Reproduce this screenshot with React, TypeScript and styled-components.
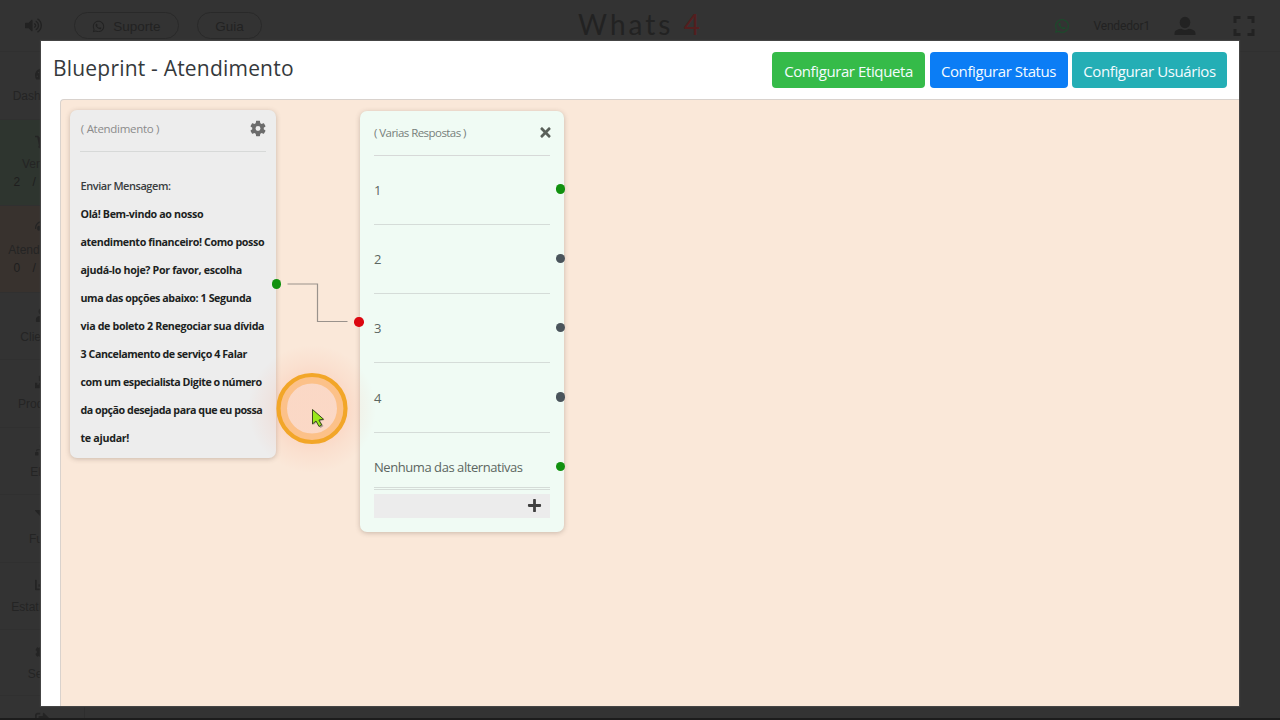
import React from "react";
import styled, { createGlobalStyle } from "styled-components";
import {
  FaVolumeUp, FaWhatsapp, FaTachometerAlt, FaShoppingCart, FaHeadset,
  FaUser, FaBoxes, FaSitemap, FaFilter, FaChartBar, FaCog, FaSignOutAlt, FaTimes, FaPlus,
} from "react-icons/fa";
import type { IconType } from "react-icons";

const Global = createGlobalStyle`
  * { box-sizing: border-box; }
  body { margin: 0; background: #333; overflow: hidden; font-family: "Open Sans", "Noto Sans", sans-serif; }
`;

const Screen = styled.div`
  position: relative;
  width: 1280px;
  height: 720px;
  overflow: hidden;
  background: #333;
`;

const TopBar = styled.header`
  display: flex;
  align-items: center;
  height: 52px;
  padding: 0 25px;
  border-bottom: 1px solid #303030;
  color: #222;
  font-family: "Liberation Sans", Arial, sans-serif;
  font-size: 13.5px;
`;
const BarGroup = styled.div<{ $end?: boolean }>`
  flex: 1;
  display: flex;
  align-items: center;
  justify-content: ${(p) => (p.$end ? "flex-end" : "flex-start")};
`;
const Pill = styled.div<{ $w: number; $ml: number }>`
  display: flex;
  align-items: center;
  justify-content: center;
  gap: 8px;
  width: ${(p) => p.$w}px;
  height: 27px;
  margin-left: ${(p) => p.$ml}px;
  padding-top: 1px;
  border: 1px solid #292929;
  border-radius: 14px;
`;
const Brand = styled.div`
  padding-left: 1px;
  font: 28px Lato, sans-serif;
  letter-spacing: 3px;
  line-height: 48px;
  align-self: flex-start;
  span { color: #541e1e; }
`;
const Seller = styled.span`
  margin: 0 24px 0 23px;
  padding-top: 1px;
  font: 12px Roboto, sans-serif;
  letter-spacing: -0.15px;
`;
const FullScreenIcon = styled.svg`
  margin-left: 37px;
`;

const Side = styled.nav`
  display: flex;
  flex-direction: column;
  width: 85px;
  border-right: 1px solid #2e2e2e;
`;
const SideItem = styled.div<{ $h: number; $bg?: string }>`
  flex: none;
  display: flex;
  flex-direction: column;
  align-items: center;
  height: ${(p) => p.$h}px;
  padding-top: 15px;
  border-bottom: 1px solid #303030;
  background: ${(p) => p.$bg ?? "transparent"};
  color: #242424;
  font: 12px/18px "Liberation Sans", Arial, sans-serif;
  svg { margin-bottom: 6px; flex: none; }
`;
const Count = styled.div`
  letter-spacing: 4.5px;
  line-height: 18px;
  color: #1e1e1e;
  white-space: pre;
`;

const BottomEdge = styled.div`
  position: absolute;
  left: 0;
  right: 0;
  bottom: 0;
  height: 2px;
  background: #1c1c1c;
`;

const Modal = styled.section`
  position: absolute;
  left: 41px;
  top: 41px;
  width: 1198px;
  height: 665px;
  display: flex;
  flex-direction: column;
  background: #fff;
  box-shadow: 0 0 1px 1px #444;
`;
const ModalHead = styled.div`
  flex: none;
  display: flex;
  justify-content: space-between;
  height: 58px;
  padding: 11px 12px 0 12px;
`;
const Title = styled.h1`
  margin: 0;
  font-size: 21px;
  font-weight: 400;
  line-height: 32px;
  letter-spacing: 0.2px;
  color: #35393c;
`;
const Buttons = styled.div`
  display: flex;
  gap: 4.5px;
`;
const Button = styled.button<{ $bg: string; $w: number }>`
  width: ${(p) => p.$w}px;
  height: 36px;
  padding: 2px 0 0;
  border: 0;
  border-radius: 4px;
  background: ${(p) => p.$bg};
  color: #f4fbff;
  font: 15px "Open Sans", sans-serif;
  letter-spacing: -0.4px;
  white-space: nowrap;
`;
const Canvas = styled.div`
  position: relative;
  flex: 1;
  margin-left: 19px;
  overflow: hidden;
  border: 1px solid #d9d2cd;
  border-width: 1px 0 0 1px;
  border-radius: 4px 0 0 0;
  background: #fae8d9;
`;

const Node = styled.article<{ $x: number; $y: number; $w: number; $h: number; $bg: string; $pad: string }>`
  position: absolute;
  left: ${(p) => p.$x}px;
  top: ${(p) => p.$y}px;
  width: ${(p) => p.$w}px;
  height: ${(p) => p.$h}px;
  padding: ${(p) => p.$pad};
  border-radius: 7px;
  background: ${(p) => p.$bg};
  box-shadow: 0 1px 5px rgba(90, 70, 60, 0.3);
`;
const NodeHead = styled.div<{ $h: number; $color: string }>`
  display: flex;
  justify-content: space-between;
  height: ${(p) => p.$h}px;
  border-bottom: 1px solid #d7d9d8;
  font-size: 11.5px;
  line-height: 18px;
  color: ${(p) => p.$color};
  svg { flex: none; }
`;
const GearIcon = styled.svg`
  margin-right: -1px;
`;
const Message = styled.div`
  padding-top: 19.5px;
`;
const Line = styled.div<{ $ls: number; $label?: boolean }>`
  height: 28.1px;
  padding-left: 0.5px;
  font-size: ${(p) => (p.$label ? 11 : 10.7)}px;
  line-height: 28px;
  font-weight: ${(p) => (p.$label ? 600 : 750)};
  color: ${(p) => (p.$label ? "#3a3d40" : "#1c1f22")};
  letter-spacing: ${(p) => p.$ls}px;
  white-space: nowrap;
`;
const Spaced = styled.span<{ $ls: number }>`
  letter-spacing: ${(p) => p.$ls}px;
  white-space: nowrap;
`;
const Option = styled.div<{ $last?: boolean }>`
  display: flex;
  align-items: center;
  height: ${(p) => (p.$last ? 55.5 : 69.3)}px;
  padding-top: ${(p) => (p.$last ? 15 : 0.5)}px;
  border-bottom: 1px solid #d5dcd8;
  font-size: 13px;
  color: #5c6661;
`;
const AddRow = styled.div`
  display: flex;
  align-items: center;
  justify-content: flex-end;
  height: 29px;
  margin-top: 1px;
  padding-right: 8px;
  border-top: 1px solid #d5dcd8;
  background: linear-gradient(#f0fbf4 4px, #ececec 4px);
  color: #3f3f3f;
  svg { margin-top: 3px; }
`;
const Port = styled.i<{ $x: number; $y: number; $c: string }>`
  position: absolute;
  left: ${(p) => p.$x - 4.7}px;
  top: ${(p) => p.$y - 4.7}px;
  width: 9.4px;
  height: 9.4px;
  border-radius: 50%;
  background: ${(p) => p.$c};
`;
const CloseIcon = styled(FaTimes)`
  margin: 1px -3px 0 0;
`;
const Overlay = styled.svg`
  position: absolute;
  left: 0;
  top: 0;
  pointer-events: none;
`;
const Glow = styled.div`
  position: absolute;
  left: 181px;
  top: 239px;
  width: 140px;
  height: 140px;
  border-radius: 50%;
  background: radial-gradient(circle, rgba(255, 120, 80, 0.14) 0, rgba(255, 120, 80, 0.14) 32px, rgba(255, 120, 80, 0.07) 45px, rgba(255, 120, 80, 0) 64px);
`;

const sideItems: { icon: IconType; label: string; h: number; bg?: string; count?: string }[] = [
  { icon: FaTachometerAlt, label: "Dashboard", h: 68 },
  { icon: FaShoppingCart, label: "Vendas", h: 86, bg: "#2e352f", count: "2 / 10" },
  { icon: FaHeadset, label: "Atendimento", h: 87, bg: "#38322e", count: "0 / 10" },
  { icon: FaUser, label: "Clientes", h: 67 },
  { icon: FaBoxes, label: "Produtos", h: 68 },
  { icon: FaSitemap, label: "Elos", h: 67 },
  { icon: FaFilter, label: "Funil", h: 68 },
  { icon: FaChartBar, label: "Estatísticas", h: 67 },
  { icon: FaCog, label: "Setor", h: 66 },
  { icon: FaSignOutAlt, label: "", h: 67 },
];

const lines: [string, number][] = [
  ["Olá! Bem-vindo ao nosso", -0.35],
  ["atendimento financeiro! Como posso", -0.38],
  ["ajudá-lo hoje? Por favor, escolha", -0.34],
  ["uma das opções abaixo: 1 Segunda", -0.41],
  ["via de boleto 2 Renegociar sua dívida", -0.35],
  ["3 Cancelamento de serviço 4 Falar", -0.44],
  ["com um especialista Digite o número", -0.46],
  ["da opção desejada para que eu possa", -0.46],
  ["te ajudar!", -0.3],
];

const GREEN = "#11910f";
const SLATE = "#4a545b";

export default function App() {
  return (
    <Screen>
      <Global />
      <TopBar>
        <BarGroup>
          <FaVolumeUp size={17} />
          <Pill $w={105} $ml={32}><FaWhatsapp size={13} />Suporte</Pill>
          <Pill $w={65} $ml={18}>Guia</Pill>
        </BarGroup>
        <Brand>Whats <span>4</span></Brand>
        <BarGroup $end>
          <FaWhatsapp size={16} color="#1d4a2c" />
          <Seller>Vendedor1</Seller>
          <svg width="22" height="20" viewBox="0 0 22 20" fill="currentColor">
            <ellipse cx="11" cy="6.500" rx="5.300" ry="5.700" />
            <path d="M.5 19v-1.500C.5 14.500 3.500 13.500 7 12.800c2.300 1.500 5.700 1.500 8 0 3.500.7 6.500 1.700 6.500 4.700V19z" />
          </svg>
          <FullScreenIcon width="22" height="20" viewBox="0 0 22 20" fill="none" stroke="currentColor" strokeWidth="3">
            <path d="M2 7V1.500H7.500M14.500 1.500H20V7M20 13v5.500H14.500M7.500 18.500H2V13" />
          </FullScreenIcon>
        </BarGroup>
      </TopBar>
      <Side>
        {sideItems.map(({ icon: Icon, label, h, bg, count }) => (
          <SideItem key={h + label} $h={h} $bg={bg}>
            <Icon size={14} />
            {label}
            {count && <Count>{count}</Count>}
          </SideItem>
        ))}
      </Side>
      <BottomEdge />

      <Modal>
        <ModalHead>
          <Title>Blueprint - Atendimento</Title>
          <Buttons>
            <Button $bg="#35bb49" $w={153}>Configurar Etiqueta</Button>
            <Button $bg="#0b7df5" $w={138}>Configurar Status</Button>
            <Button $bg="#24aeb5" $w={155}>Configurar Usuários</Button>
          </Buttons>
        </ModalHead>
        <Canvas>
          <Node $x={9} $y={10} $w={206} $h={348} $bg="#ededed" $pad="10px">
            <NodeHead $h={32} $color="#8b8b8b">
              <Spaced $ls={-0.3}>&#8202;( Atendimento )</Spaced>
              <GearIcon width="17" height="17" viewBox="0 0 24 24" fill="#6c6c6c">
                <path d="M19.4 13a7.500 7.500 0 0 0 0-2l2.300-1.700c.2-.2.3-.5.1-.8l-2.200-3.800c-.1-.3-.4-.3-.7-.2l-2.600 1a8 8 0 0 0-1.800-1l-.4-2.800c0-.3-.3-.5-.6-.5h-4.400c-.3 0-.5.2-.6.5L8.100 4.500a8 8 0 0 0-1.800 1l-2.600-1c-.3-.1-.6 0-.7.2L.8 8.500c-.1.300-.1.600.1.800L3.200 11a7.500 7.500 0 0 0 0 2L.9 14.700c-.2.200-.3.500-.1.800L3 19.300c.1.300.4.300.7.200l2.600-1a8 8 0 0 0 1.800 1l.4 2.800c.1.300.3.500.6.500h4.400c.3 0 .6-.2.6-.5l.4-2.800a8 8 0 0 0 1.800-1l2.600 1c.3.100.6 0 .7-.2l2.200-3.800c.2-.3.100-.6-.1-.8L19.400 13zM11.300 15.500a3.500 3.500 0 1 1 0-7 3.500 3.500 0 0 1 0 7z" />
              </GearIcon>
            </NodeHead>
            <Message>
              <Line $ls={-0.45} $label>Enviar Mensagem:</Line>
              {lines.map(([t, ls]) => <Line key={t} $ls={ls}>{t}</Line>)}
            </Message>
            <Port $x={206.500} $y={174} $c={GREEN} />
          </Node>
          <Node $x={299} $y={11} $w={204} $h={421} $bg="#f0fbf4" $pad="13px 14px">
            <NodeHead $h={31.5} $color="#77807b">
              <Spaced $ls={-0.55}>( Varias Respostas )</Spaced>
              <CloseIcon size={15} color="#596059" />
            </NodeHead>
            {["1", "2", "3", "4"].map((n) => <Option key={n}>{n}</Option>)}
            <Option $last><Spaced $ls={-0.44}>Nenhuma das alternativas</Spaced></Option>
            <AddRow><FaPlus size={15} /></AddRow>
            <Port $x={-1} $y={211} $c="#dc0710" />
            {[78, 147.500, 216.500, 286, 355.500].map((y, i) => (
              <Port key={y} $x={200.500} $y={y} $c={i === 0 || i === 4 ? GREEN : SLATE} />
            ))}
          </Node>
          <Glow />
          <Overlay width="520" height="460" fill="none">
            <path d="M226.500 184H256.500V221.500H286.500" stroke="#99928c" strokeWidth="1.200" />
            <circle cx="251" cy="308.500" r="29" stroke="#fda94c" strokeOpacity=".5" strokeWidth="8" />
            <circle cx="251" cy="308.500" r="33.500" stroke="#f2a628" strokeWidth="4.200" />
            <path d="M252.500 311v14l3.500-3 3.500 6 3-2-3.500-5 4.500-1z" fill="#555" opacity=".45" />
            <path d="M251.500 309.500v14.500l3.500-3 3 5.500 2.700-1.500-2.800-5 4.600-.8z" fill="#9be81c" stroke="#3b4a1c" strokeWidth="1" />
          </Overlay>
        </Canvas>
      </Modal>
    </Screen>
  );
}
